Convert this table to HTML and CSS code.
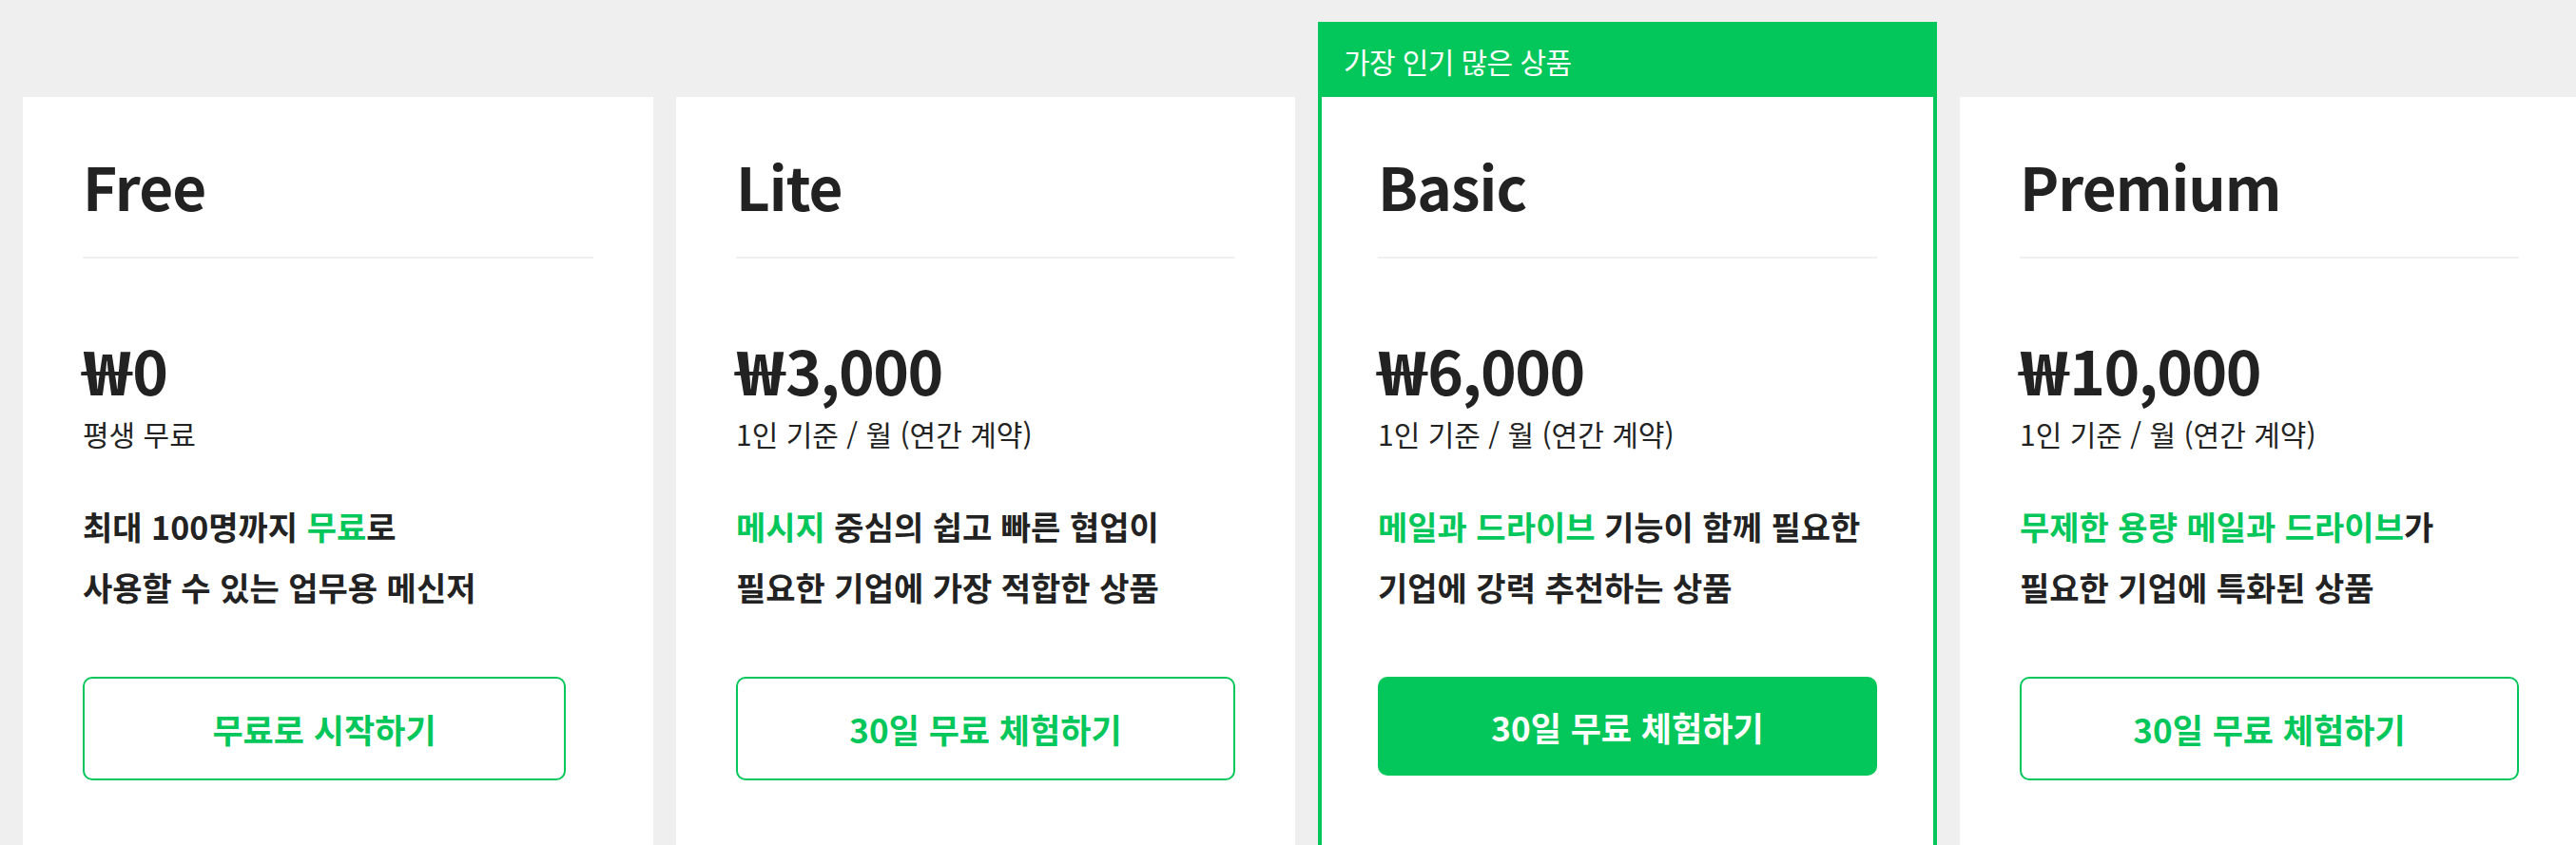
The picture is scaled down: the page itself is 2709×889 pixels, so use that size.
FILE: index.html
```html
<!DOCTYPE html>
<html lang="ko">
<head>
  <meta charset="UTF-8">
  <meta name="viewport" content="width=device-width, initial-scale=1">
  <title>요금제 안내</title>
  <link rel="stylesheet" href="styles.css">
</head>
<body>

<div class="plans">
  <div class="plan plan-first">
    <h3 class="plan-name">Free</h3>
    <div class="price"><span class="won">₩</span>0</div>
    <p class="price-note">평생 무료</p>
    <p class="desc">최대 100명까지 <span class="green">무료</span>로<br>사용할 수 있는 업무용 메신저</p>
    <a class="btn btn-short" href="#">무료로 시작하기</a>
  </div>

  <div class="plan">
    <h3 class="plan-name">Lite</h3>
    <div class="price"><span class="won">₩</span>3,000</div>
    <p class="price-note">1인 기준 / 월 (연간 계약)</p>
    <p class="desc"><span class="green">메시지</span> 중심의 쉽고 빠른 협업이<br>필요한 기업에 가장 적합한 상품</p>
    <a class="btn" href="#">30일 무료 체험하기</a>
  </div>

  <div class="plan plan-best">
    <div class="badge">가장 인기 많은 상품</div>
    <div class="plan-body">
      <h3 class="plan-name">Basic</h3>
      <div class="price"><span class="won">₩</span>6,000</div>
      <p class="price-note">1인 기준 / 월 (연간 계약)</p>
      <p class="desc"><span class="green">메일과 드라이브</span> 기능이 함께 필요한<br>기업에 강력 추천하는 상품</p>
      <a class="btn btn-fill" href="#">30일 무료 체험하기</a>
    </div>
  </div>

  <div class="plan">
    <h3 class="plan-name">Premium</h3>
    <div class="price"><span class="won">₩</span>10,000</div>
    <p class="price-note">1인 기준 / 월 (연간 계약)</p>
    <p class="desc"><span class="green">무제한 용량 메일과 드라이브</span>가<br>필요한 기업에 특화된 상품</p>
    <a class="btn" href="#">30일 무료 체험하기</a>
  </div>
</div>

</body>
</html>
```

FILE: styles.css
```css
body {
  font-family: "Noto Sans CJK KR", "Noto Sans", sans-serif;
  background: #efefef;
  color: #222;
  margin: 0;
  overflow: hidden;
}
.plans {
  display: flex;
  align-items: flex-start;
  gap: 24px;
  padding: 23px 0 0 24px;
}
.plan {
  flex-shrink: 0;
  width: 651px;
  height: 900px;
  margin-top: 79px;
  padding: 62px 63px 0;
  background: white;
  box-sizing: border-box;
}
.plan-first {
  width: 663px;
}
.plan-best {
  margin-top: 0;
  height: 979px;
  padding: 0;
  border: 4px solid #03c75a;
}
.plan-best .plan-body {
  padding: 62px 59px 0;
}
.badge {
  height: 75px;
  margin: 0 -4px;
  padding-left: 27px;
  background: #03c75a;
  color: white;
  font-size: 30px;
  letter-spacing: -0.6px;
  line-height: 75px;
}
.plan-name {
  margin: 0;
  padding-bottom: 44px;
  border-bottom: 2px solid #f0f0f0;
  font-size: 62px;
  line-height: 1;
  font-weight: 700;
  letter-spacing: -1px;
}
.price {
  margin-top: 84px;
  font-size: 64px;
  line-height: 1;
  font-weight: 700;
  letter-spacing: -1.5px;
}
.won {
  display: inline-block;
  transform: scaleX(1.35);
  transform-origin: left center;
  margin-right: 16px;
}
.price-note {
  margin: 15px 0 0;
  font-size: 30px;
  line-height: 42px;
}
.desc {
  margin: 45px 0 0;
  font-size: 34px;
  line-height: 64px;
  font-weight: 700;
}
.green {
  color: #03c75a;
}
.btn {
  display: flex;
  align-items: center;
  justify-content: center;
  height: 105px;
  margin-top: 62px;
  border: 2px solid #03c75a;
  border-radius: 10px;
  color: #03c75a;
  font-size: 35px;
  font-weight: 700;
  text-decoration: none;
}
.btn-short {
  width: 504px;
}
.btn-fill {
  height: 104px;
  border: none;
  background: #03c75a;
  color: white;
}
```
